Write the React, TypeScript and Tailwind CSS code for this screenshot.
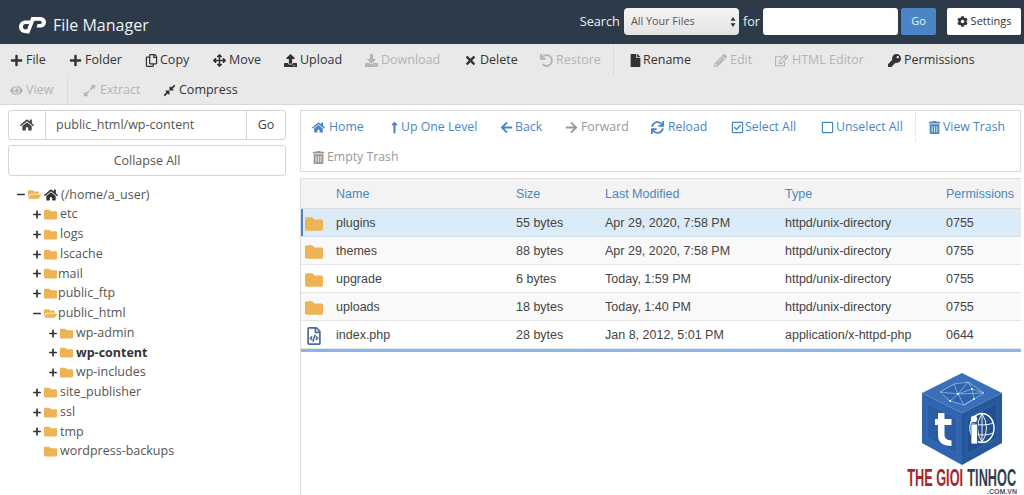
import type { ComponentType, ReactNode } from "react";
import {
  FaArrowLeft,
  FaArrowRight,
  FaArrowsAlt,
  FaCog,
  FaCompressAlt,
  FaDownload,
  FaExpandAlt,
  FaEye,
  FaFile,
  FaFolder,
  FaFolderOpen,
  FaHome,
  FaKey,
  FaLongArrowAltUp,
  FaMinus,
  FaPencilAlt,
  FaPlus,
  FaRegCheckSquare,
  FaRegCopy,
  FaRegEdit,
  FaRegFileCode,
  FaRegSquare,
  FaSync,
  FaTimes,
  FaTrashAlt,
  FaUndo,
  FaUpload,
} from "react-icons/fa";

type Icon = ComponentType<{ className?: string }>;

const openSans = "font-['Open_Sans','Noto_Sans',sans-serif]";

const CpanelLogo = () => (
  <svg viewBox="0 0 28 18" className="h-[18px] w-[28px]" fill="#fff">
    <path d="M6.5 4.5h6.2l-1.3 3.6H7.6a2.6 2.6 0 0 0 0 5.2h2.2l-1.2 3.7H6.4a6.3 6.3 0 0 1 .1-12.5z" />
    <path d="M13.4 1h9.4a4.9 4.9 0 0 1 0 10.4h-4.2l1-3.4h2.5a1.6 1.6 0 0 0 0-3.2h-5.8L11.2 17.6H7.8z" />
  </svg>
);

const ToolItem = ({
  icon: I,
  label,
  off,
  gap = "gap-[3px]",
  className = "",
}: {
  icon: Icon;
  label: string;
  off?: boolean;
  gap?: string;
  className?: string;
}) => (
  <div className={`flex h-[30px] items-center ${gap} ${off ? "text-[#b4b4b4]" : "text-[#333]"} ${className}`}>
    <I className="text-[13px]" />
    <span>{label}</span>
  </div>
);

const NavItem = ({
  icon: I,
  label,
  off,
  gap = "gap-[3px]",
  className = "",
}: {
  icon: Icon;
  label: string;
  off?: boolean;
  gap?: string;
  className?: string;
}) => (
  <div className={`flex h-[30px] items-center ${gap} ${off ? "text-[#999]" : "text-[#4a86c5]"} ${className}`}>
    <I className="text-[13px]" />
    <span>{label}</span>
  </div>
);

const TreeRow = ({
  depth,
  sign,
  open,
  gap = 3,
  bold,
  children,
}: {
  depth: number;
  sign?: "plus" | "minus";
  open?: boolean;
  gap?: number;
  bold?: boolean;
  children: ReactNode;
}) => {
  const Folder = open ? FaFolderOpen : FaFolder;
  return (
    <div className="flex h-[19.75px] items-center" style={{ paddingLeft: depth * 16 + 9 }}>
      <span className="flex w-[8px] shrink-0 items-center justify-center text-[#333]">
        {sign === "plus" && <FaPlus className="text-[9px]" />}
        {sign === "minus" && <FaMinus className="text-[9px]" />}
      </span>
      <Folder className="ml-[3px] shrink-0 text-[13px] text-[#eeb354]" />
      <span
        className={`flex items-center whitespace-nowrap ${bold ? "font-bold text-[#333]" : "text-[#555]"}`}
        style={{ marginLeft: gap }}
      >
        {children}
      </span>
    </div>
  );
};

const files = [
  { name: "plugins", size: "55 bytes", date: "Apr 29, 2020, 7:58 PM", type: "httpd/unix-directory", perm: "0755" },
  { name: "themes", size: "88 bytes", date: "Apr 29, 2020, 7:58 PM", type: "httpd/unix-directory", perm: "0755" },
  { name: "upgrade", size: "6 bytes", date: "Today, 1:59 PM", type: "httpd/unix-directory", perm: "0755" },
  { name: "uploads", size: "18 bytes", date: "Today, 1:40 PM", type: "httpd/unix-directory", perm: "0755" },
  { name: "index.php", size: "28 bytes", date: "Jan 8, 2012, 5:01 PM", type: "application/x-httpd-php", perm: "0644" },
];

const colClass = "grid grid-cols-[35px_180px_89px_180px_161px_1fr] items-center";

const Watermark = () => (
  <div className="absolute right-[7px] bottom-[1px] flex h-[121px] w-[110px] flex-col items-center">
    <svg viewBox="0 0 80 92" className="h-[92px] w-[80px] shrink-0">
      <polygon points="40,0 80,20 40,40 0,20" fill="#3a70ba" />
      <polygon points="0,20 40,40 40,92 0,70" fill="#2f65ae" />
      <polygon points="80,20 40,40 40,92 80,70" fill="#27589b" />
      <polygon points="5,30 35,45 35,81 5,65" fill="#2b5da3" stroke="#3a70ba" />
      <polygon points="75,30 45,45 45,81 75,65" fill="#22508f" stroke="#2f65ae" />
      <polygon points="40,8 64,20 40,32 16,20" fill="#2f65ae" />
      <g stroke="#d5e2f3" strokeWidth="0.5" fill="none">
        <path d="M18 19L32 11L46 9L62 20L42 32L28 28ZM32 11L36 21L46 9M28 28L36 21L42 32M36 21L62 20M18 19L36 21M36 21L50 16L46 9M50 16L62 20M50 16L52 26L42 32" />
      </g>
      <g fill="#fff">
        <circle cx="36" cy="21" r="1" />
        <circle cx="50" cy="16" r="0.9" />
        <circle cx="28" cy="28" r="0.9" />
        <circle cx="52" cy="26" r="0.9" />
      </g>
      <path d="M16 40h6.5v6h7v6h-7v10q0 5 7 5.5v5.5q-13.5 0-13.5-11v-10h-3v-6h3z" fill="#fff" />
      <ellipse cx="60" cy="55" rx="12" ry="14.5" fill="none" stroke="#fff" strokeWidth="1.4" />
      <path d="M60 40.5v29M49 50q11 4 23 0M49 60q11 4 23 0M60 40.5q-9 14.5 0 29M60 40.5q9 14.5 0 29" stroke="#fff" strokeWidth="0.9" fill="none" />
      <rect x="49" y="51" width="6.5" height="20" fill="#fff" stroke="#22508f" strokeWidth="0.8" />
      <circle cx="52" cy="46" r="3.2" fill="#fff" />
    </svg>
    <div className="mt-[3px] flex h-[19px] w-full justify-center">
      <div className="flex w-max shrink-0 scale-x-[0.53] gap-[8px] font-['Liberation_Sans',sans-serif] text-[24px] leading-[19px] font-bold whitespace-nowrap">
        <span className="text-[#a5262b]">THE GIOI</span>
        <span className="text-[#333f4d]">TINHOC</span>
      </div>
    </div>
    <div className="mt-[1px] w-full text-right font-['Liberation_Sans',sans-serif] text-[7px] leading-[7px] font-bold text-[#4b5663]">
      .COM.VN
    </div>
  </div>
);

export default function App() {
  return (
    <div className={`relative flex h-[495px] w-[1024px] flex-col overflow-hidden bg-white text-[12.5px] ${openSans}`}>
      {/* header */}
      <header className="flex h-[44px] shrink-0 bg-[#2c3a4a] pr-[3px] pl-[18px]">
        <div className="flex items-center pt-[5px]">
          <CpanelLogo />
          <span className="ml-[7px] text-[16px] text-[#f1f1f1]">File Manager</span>
        </div>
        <div className="ml-auto flex items-center pb-[1px]">
          <span className="text-[12.7px] text-[#eee]">Search</span>
          <div className="ml-[4px] flex h-[27px] w-[115px] items-center justify-between rounded-[4px] bg-gradient-to-b from-[#f4f4f4] to-[#e4e4e4] pr-[3px] pl-[7px] text-[10.8px] text-[#555]">
            <span>All Your Files</span>
            <svg viewBox="0 0 6 12" className="h-[10px] w-[6px]" fill="#333">
              <path d="M3 0l3 4.6H0zM3 12L0 7.4h6z" />
            </svg>
          </div>
          <span className="ml-[4px] text-[12.7px] text-[#eee]">for</span>
          <div className="ml-[3px] h-[27px] w-[135px] rounded-[3px] bg-white" />
          <div className="ml-[3px] flex h-[27px] w-[35px] items-center justify-center rounded-[2px] bg-[#4a86c5] text-[11px] text-[#eaf1f8]">
            Go
          </div>
          <div className="ml-[11px] flex h-[27px] w-[74px] items-center justify-center gap-[3px] rounded-[2px] bg-white text-[11px] text-[#333]">
            <FaCog className="text-[11px]" />
            Settings
          </div>
        </div>
      </header>

      {/* toolbar */}
      <div className="h-[61px] shrink-0 border-b border-[#d8d8d8] bg-[#e9e9e9] pt-[1px] pl-[10px]">
        <div className="flex h-[30px] items-center">
          <ToolItem icon={FaPlus} label="File" className="w-[59px]" />
          <ToolItem icon={FaPlus} label="Folder" className="w-[76px]" />
          <ToolItem icon={FaRegCopy} label="Copy" gap="gap-[2px]" className="w-[68px]" />
          <ToolItem icon={FaArrowsAlt} label="Move" className="w-[71px]" />
          <ToolItem icon={FaUpload} label="Upload" className="w-[81px]" />
          <ToolItem icon={FaDownload} label="Download" off className="w-[99px]" />
          <ToolItem icon={FaTimes} label="Delete" className="w-[76px]" />
          <ToolItem icon={FaUndo} label="Restore" off className="w-[73px]" />
          <div className="h-[30px] w-[16px] border-l border-dotted border-[#cfcfcf]" />
          <ToolItem icon={FaFile} label="Rename" gap="gap-[1px]" className="w-[85px]" />
          <ToolItem icon={FaPencilAlt} label="Edit" off className="w-[61px]" />
          <ToolItem icon={FaRegEdit} label="HTML Editor" off gap="gap-[4px]" className="w-[113px]" />
          <ToolItem icon={FaKey} label="Permissions" />
        </div>
        <div className="flex h-[30px] items-center">
          <ToolItem icon={FaEye} label="View" off className="w-[57px]" />
          <div className="h-[29px] w-[16px] border-l border-dotted border-[#cfcfcf]" />
          <ToolItem icon={FaExpandAlt} label="Extract" off gap="gap-[4px]" className="w-[80px]" />
          <ToolItem icon={FaCompressAlt} label="Compress" />
        </div>
      </div>

      <div className="flex min-h-0 flex-1">
        {/* left column */}
        <aside className="w-[300px] shrink-0 pt-[5px] pr-[14px] pl-[8px] text-[#555]">
          <div className="flex h-[30px] rounded-[3px] border border-[#d5d5d5]">
            <div className="flex w-[37px] items-center justify-center border-r border-[#d5d5d5] text-[#444]">
              <FaHome className="text-[14px]" />
            </div>
            <div className="flex flex-1 items-center pl-[10px] text-[#555]">public_html/wp-content</div>
            <div className="flex w-[39px] items-center justify-center border-l border-[#d5d5d5] text-[#444]">Go</div>
          </div>
          <div className="mt-[5px] flex h-[31px] items-center justify-center rounded-[3px] border border-[#d5d5d5] pt-[1px]">
            Collapse All
          </div>
          <div className="mt-[9px]">
            <TreeRow depth={0} sign="minus" open>
              <FaHome className="mr-[3px] text-[14px] text-[#333]" />
              (/home/a_user)
            </TreeRow>
            <TreeRow depth={1} sign="plus">etc</TreeRow>
            <TreeRow depth={1} sign="plus">logs</TreeRow>
            <TreeRow depth={1} sign="plus">lscache</TreeRow>
            <TreeRow depth={1} sign="plus" gap={1}>mail</TreeRow>
            <TreeRow depth={1} sign="plus" gap={1}>public_ftp</TreeRow>
            <TreeRow depth={1} sign="minus" open gap={1}>public_html</TreeRow>
            <TreeRow depth={2} sign="plus">wp-admin</TreeRow>
            <TreeRow depth={2} sign="plus" bold>wp-content</TreeRow>
            <TreeRow depth={2} sign="plus">wp-includes</TreeRow>
            <TreeRow depth={1} sign="plus">site_publisher</TreeRow>
            <TreeRow depth={1} sign="plus">ssl</TreeRow>
            <TreeRow depth={1} sign="plus">tmp</TreeRow>
            <TreeRow depth={1}>wordpress-backups</TreeRow>
          </div>
        </aside>

        {/* right column */}
        <main className="flex min-w-0 flex-1 flex-col pt-[5px] pr-[3px]">
          <div className="h-[62px] shrink-0 border border-[#dcdcdc] pt-[1px] pl-[11px] text-[12.3px]">
            <div className="flex h-[30px] items-center">
              <NavItem icon={FaHome} label="Home" gap="gap-[4px]" className="w-[76px]" />
              <NavItem icon={FaLongArrowAltUp} label="Up One Level" gap="gap-[0px]" className="w-[112px]" />
              <NavItem icon={FaArrowLeft} label="Back" gap="gap-[2px]" className="w-[65px]" />
              <NavItem icon={FaArrowRight} label="Forward" off className="w-[86px]" />
              <NavItem icon={FaSync} label="Reload" gap="gap-[4px]" className="w-[80px]" />
              <NavItem icon={FaRegCheckSquare} label="Select All" gap="gap-[1px]" className="w-[90px]" />
              <NavItem icon={FaRegSquare} label="Unselect All" gap="gap-[2px]" className="w-[94px]" />
              <div className="h-[30px] w-[13px] border-l border-dotted border-[#d5d5d5]" />
              <NavItem icon={FaTrashAlt} label="View Trash" gap="gap-[2px]" />
            </div>
            <div className="flex h-[30px] items-center">
              <NavItem icon={FaTrashAlt} label="Empty Trash" off gap="gap-[2px]" />
            </div>
          </div>

          <div className="mt-[6px] flex flex-1 flex-col border-l border-[#dcdcdc] font-['Liberation_Sans',sans-serif] text-[12.5px] text-[#444]">
            <div className={`${colClass} h-[31px] shrink-0 border-y border-[#dcdcdc] bg-[#f3f3f3] pt-[1px] text-[#4a86c5]`}>
              <span />
              <span>Name</span>
              <span>Size</span>
              <span>Last Modified</span>
              <span>Type</span>
              <span>Permissions</span>
            </div>
            {files.map((f, i) => (
              <div
                key={f.name}
                className={`${colClass} h-[28px] shrink-0 border-b pt-[2px] ${
                  i === 0
                    ? "border-[#cfe0ee] bg-[#dcebf8] shadow-[inset_2px_0_0_#4a86c5]"
                    : i % 2 === 1
                      ? "border-[#e5e5e5] bg-[#f9f9f9]"
                      : "border-[#e5e5e5] bg-white"
                }`}
              >
                <span className="flex justify-start pl-[4px]">
                  {f.name === "index.php" ? (
                    <FaRegFileCode className="text-[18px] text-[#4c6c99]" />
                  ) : (
                    <FaFolder className="text-[18px] text-[#eeb354]" />
                  )}
                </span>
                <span>{f.name}</span>
                <span>{f.size}</span>
                <span>{f.date}</span>
                <span>{f.type}</span>
                <span>{f.perm}</span>
              </div>
            ))}
            <div className="h-[3px] shrink-0 bg-[#8ab4ee]" />
          </div>
        </main>
      </div>

      <Watermark />
    </div>
  );
}
